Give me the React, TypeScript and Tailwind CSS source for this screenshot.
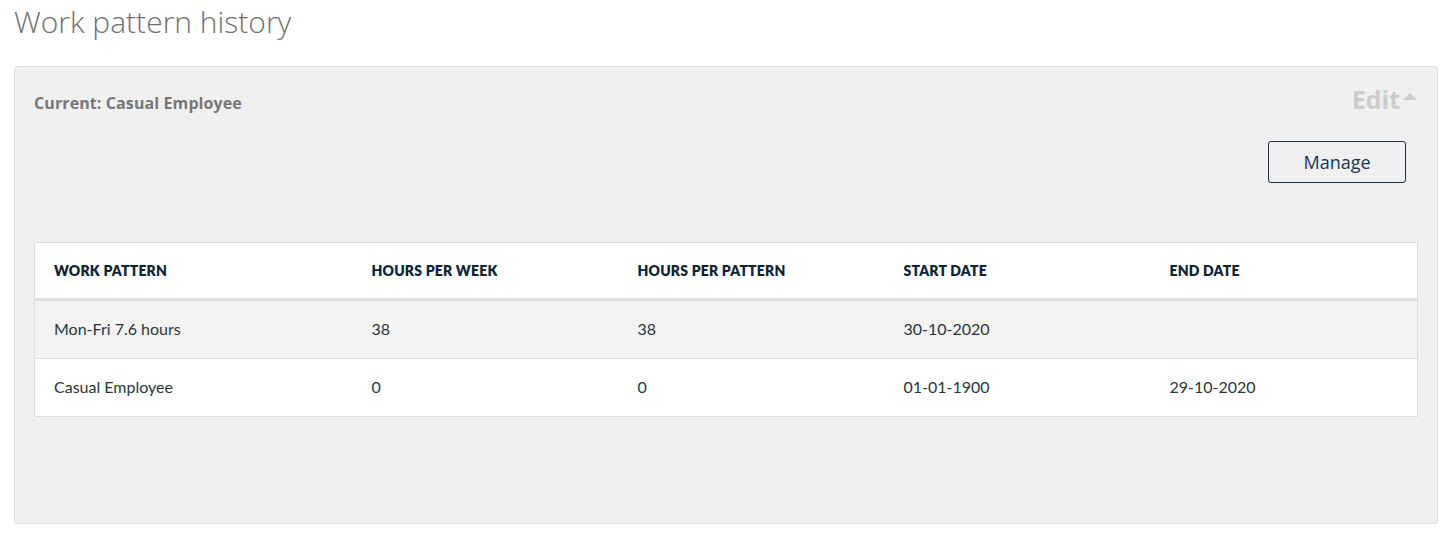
const rows = [
  { pattern: "Mon-Fri 7.6 hours", week: "38", perPattern: "38", start: "30-10-2020", end: "" },
  { pattern: "Casual Employee", week: "0", perPattern: "0", start: "01-01-1900", end: "29-10-2020" },
];

const cols = ["WORK PATTERN", "HOURS PER WEEK", "HOURS PER PATTERN", "START DATE", "END DATE"];

export default function App() {
  return (
    <div className="min-h-[534px] bg-white pl-[14px] pr-[12px] font-['Open_Sans',sans-serif]">
      <h1 className="pt-[2px] text-[30px] font-light leading-[40px] text-[#707070]">Work pattern history</h1>

      <section className="mt-[24px] h-[458px] rounded-[3px] border border-[#dddddd] bg-[#f0f0f0] px-[19px] pt-[23px]">
        <div className="flex items-start justify-between">
          <h2 className="pt-[1px] text-[16px] font-bold leading-[24px] tracking-[0.1px] text-[#777777]">Current: Casual Employee</h2>
          <button className="-mt-[3px] flex items-center text-[25px] font-bold leading-[24px] text-[#cccccc]">
            Edit
            <svg width="16" height="10" viewBox="0 0 16 10" className="ml-[2px] mb-[6px]">
              <path d="M1 9 L8 2 L15 9 Z" fill="#cccccc" />
            </svg>
          </button>
        </div>

        <div className="mt-[26px] flex justify-end pr-[12px]">
          <button className="h-[42px] w-[138px] rounded-[3px] border border-[#1c2f3c] text-[18px] text-[#1c3550]">
            Manage
          </button>
        </div>

        <table className="mt-[59px] w-full table-fixed border border-[#dddddd] bg-white font-['Lato',sans-serif]">
          <colgroup>
            <col className="w-[318px]" />
            <col className="w-[266px]" />
            <col className="w-[266px]" />
            <col className="w-[266px]" />
            <col />
          </colgroup>
          <thead>
            <tr className="h-[57px] border-b-[3px] border-[#dddddd]">
              {cols.map((c) => (
                <th key={c} className="pl-[19px] text-left text-[14px] font-extrabold tracking-[0.2px] text-[#0d2533]">
                  {c}
                </th>
              ))}
            </tr>
          </thead>
          <tbody>
            {rows.map((r, i) => (
              <tr key={r.pattern} className={i === 0 ? "h-[59px] border-b border-[#dddddd] bg-[#f4f3f2]" : "h-[58px] bg-white"}>
                {[r.pattern, r.week, r.perPattern, r.start, r.end].map((v, j) => (
                  <td key={j} className="pl-[19px] pb-[2px] text-[16px] text-[#2a3540]">
                    {v}
                  </td>
                ))}
              </tr>
            ))}
          </tbody>
        </table>
      </section>
    </div>
  );
}
